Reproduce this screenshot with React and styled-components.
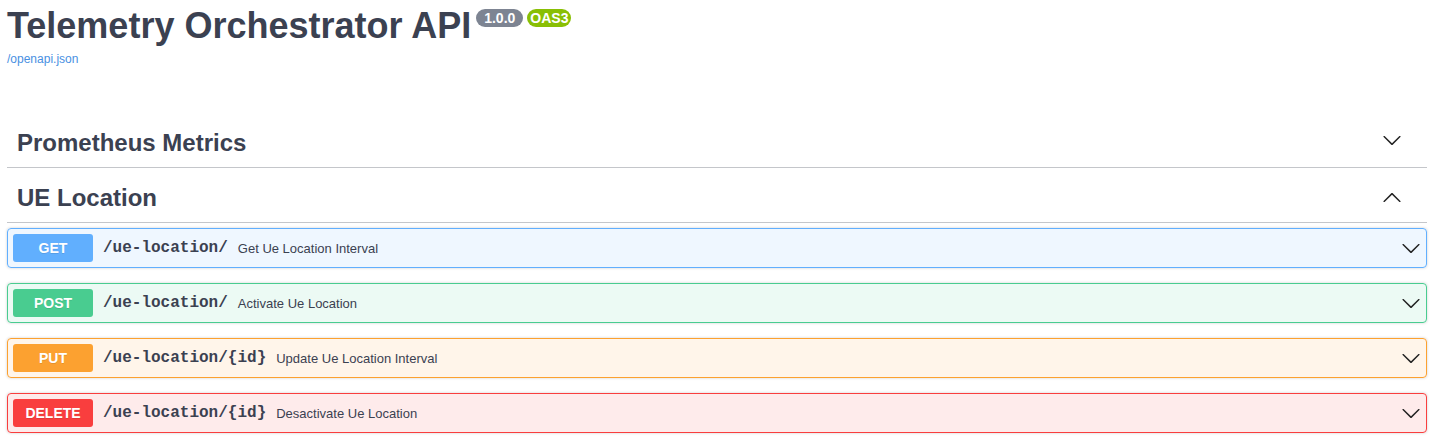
import React from "react";
import styled, { createGlobalStyle } from "styled-components";

const GlobalStyle = createGlobalStyle`
  body {
    margin: 0;
    background: #fff;
    font-family: "Liberation Sans", Arial, sans-serif;
    color: #3b4151;
  }
`;

const methods = {
  get: { color: "#61affe", bg: "rgba(97,175,254,.1)" },
  post: { color: "#49cc90", bg: "rgba(73,204,144,.1)" },
  put: { color: "#fca130", bg: "rgba(252,161,48,.1)" },
  delete: { color: "#f93e3e", bg: "rgba(249,62,62,.1)" },
};

const ops = [
  { method: "get", path: "/ue-location/", summary: "Get Ue Location Interval" },
  { method: "post", path: "/ue-location/", summary: "Activate Ue Location" },
  { method: "put", path: "/ue-location/{id}", summary: "Update Ue Location Interval" },
  { method: "delete", path: "/ue-location/{id}", summary: "Desactivate Ue Location" },
];

const Wrapper = styled.div`
  padding: 5px 11px 0 7px;
`;

const Info = styled.hgroup`
  display: block;
  margin: 0 0 52px;
`;

const Title = styled.h2`
  display: flex;
  align-items: flex-start;
  margin: 0;
  font-size: 36px;
  font-weight: 700;
  line-height: normal;
  color: #3b4151;
`;

const Pill = styled.small`
  margin: 4px 0 0 ${({ $first }) => ($first ? "5px" : "4px")};
  padding: 0 ${({ $pad }) => $pad}px;
  height: 18px;
  line-height: 18px;
  border-radius: 57px;
  background: ${({ $bg }) => $bg};
  color: #fff;
  font-size: 14px;
  font-weight: 700;
`;

const Link = styled.a`
  display: block;
  margin-top: 5px;
  font-size: 12px;
  line-height: 14px;
  color: #4990e2;
  text-decoration: none;
`;

const TagHeader = styled.div`
  display: flex;
  align-items: center;
  box-sizing: border-box;
  height: 50px;
  margin-bottom: 5px;
  padding: 0 25px 0 10px;
  border-bottom: 1px solid rgba(59, 65, 81, 0.3);
`;

const TagName = styled.h3`
  flex: 1;
  margin: 0;
  font-size: 24px;
  font-weight: 700;
  line-height: normal;
  color: #3b4151;
`;

const Arrow = styled.svg`
  width: 20px;
  height: 20px;
  flex: none;
  fill: #222;
  transform: ${({ $up }) => ($up ? "rotate(180deg)" : "none")};
  margin-top: ${({ $nudge }) => $nudge || 0}px;
`;

const Opblock = styled.div`
  display: flex;
  align-items: center;
  box-sizing: border-box;
  height: 40px;
  margin: 0 0 15px;
  padding: 5px;
  border: 1px solid ${({ $m }) => methods[$m].color};
  border-radius: 4px;
  background: ${({ $m }) => methods[$m].bg};
  box-shadow: 0 0 3px rgba(0, 0, 0, 0.19);
`;

const Method = styled.span`
  min-width: 80px;
  height: 28px;
  line-height: 28px;
  border-radius: 3px;
  background: ${({ $m }) => methods[$m].color};
  color: #fff;
  font-size: 14px;
  font-weight: 700;
  text-align: center;
  text-transform: uppercase;
  text-shadow: 0 1px 0 rgba(0, 0, 0, 0.1);
`;

const Path = styled.span`
  padding: 0 10px;
  font-family: "Liberation Mono", "Courier New", monospace;
  font-size: 16px;
  font-weight: 700;
  color: #3b4151;
`;

const Summary = styled.span`
  flex: 1;
  font-size: 13px;
  color: #3b4151;
`;

const Chevron = ({ up, nudge }) => (
  <Arrow viewBox="0 0 20 20" $up={up} $nudge={nudge}>
    <path d="M17.418 6.109c.272-.268.709-.268.979 0s.271.701 0 .969l-7.908 7.83c-.27.268-.707.268-.979 0l-7.908-7.83c-.27-.268-.27-.701 0-.969.271-.268.709-.268.979 0L10 13.25l7.418-7.141z" />
  </Arrow>
);

export default function App() {
  return (
    <>
      <GlobalStyle />
      <Wrapper>
        <Info>
          <Title>
            Telemetry Orchestrator API
            <Pill $first $bg="#7d8492" $pad={8}>1.0.0</Pill>
            <Pill $bg="#89bf04" $pad={3}>OAS3</Pill>
          </Title>
          <Link href="#">/openapi.json</Link>
        </Info>

        <TagHeader>
          <TagName>Prometheus Metrics</TagName>
          <Chevron nudge={-5} />
        </TagHeader>
        <TagHeader>
          <TagName>UE Location</TagName>
          <Chevron up />
        </TagHeader>

        {ops.map((op) => (
          <Opblock key={op.method} $m={op.method}>
            <Method $m={op.method}>{op.method}</Method>
            <Path>{op.path}</Path>
            <Summary>{op.summary}</Summary>
            <Chevron />
          </Opblock>
        ))}
      </Wrapper>
    </>
  );
}
